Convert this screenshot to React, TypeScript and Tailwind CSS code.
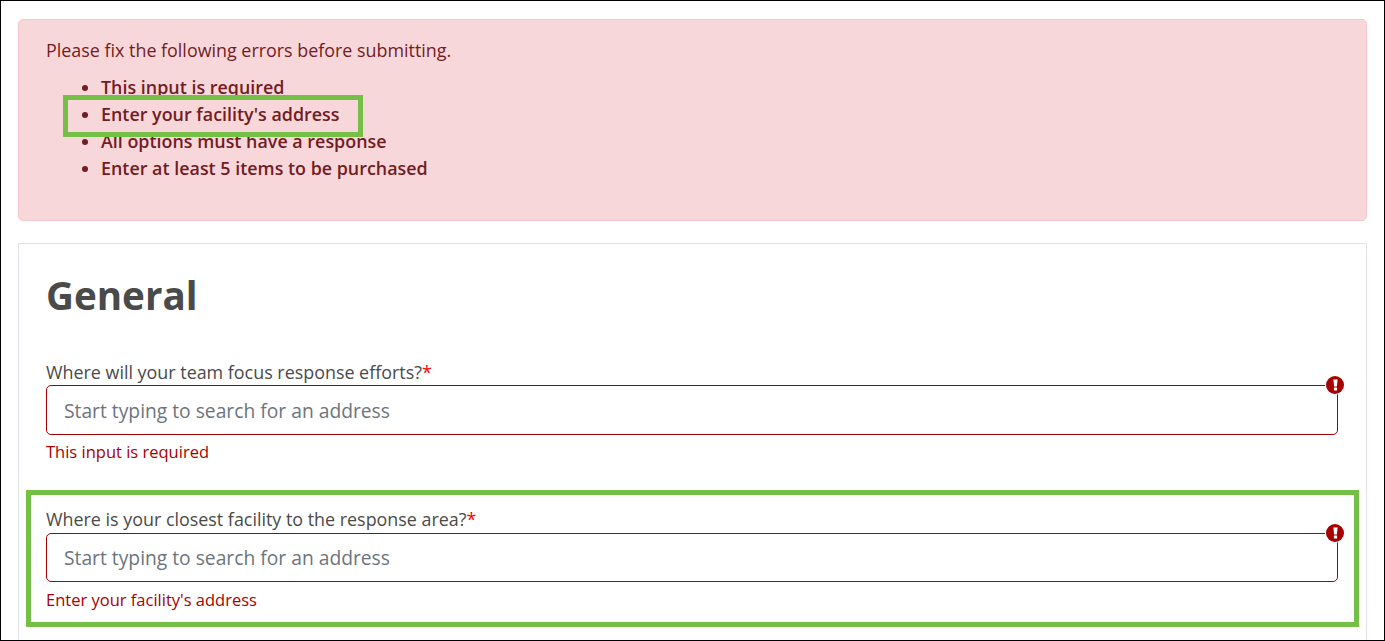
import React from 'react';

const errors = [
  'This input is required',
  "Enter your facility's address",
  'All options must have a response',
  'Enter at least 5 items to be purchased',
];

const AddressField: React.FC<{ label: string; error: string; labelClass: string; inputClass: string; errorClass: string; className: string }> = ({ label, error, labelClass, inputClass, errorClass, className }) => (
  <div className={className}>
    <label className={`block text-[17.9px] text-[#4a4a4a] ${labelClass}`}>
      {label}
      <span className="text-[#ff0000]">*</span>
    </label>
    <div className="relative">
      <input
        readOnly
        placeholder="Start typing to search for an address"
        className={`block w-full rounded-[5px] border border-[#a80000] bg-white px-[17px] text-[19.25px] text-[#495057] placeholder:text-[#6c757d] outline-none ${inputClass}`}
      />
      <span className="absolute right-[-6px] top-[-9px] flex h-[18px] w-[18px] items-center justify-center rounded-full bg-[#a80000] ring-1 ring-white">
        <svg width="5" height="12" viewBox="0 0 5 12" fill="white">
          <path d="M0.4 0.6h4.2l-0.7 6.8h-2.8z" />
          <rect x="0.9" y="8.6" width="3.2" height="2.8" rx="0.5" />
        </svg>
      </span>
    </div>
    <p className={`text-[16.5px] leading-[24px] text-[#a80000] ${errorClass}`}>{error}</p>
  </div>
);

export default function App() {
  return (
    <div className="relative h-[641px] w-[1385px] overflow-hidden border border-black bg-white font-['Open_Sans',sans-serif]">
      <div className="flex flex-col gap-[22px] pl-[17px] pr-[17px] pt-[18px]">
        <div className="h-[202px] rounded-[5px] border border-[#f5c6cb] bg-[#f8d7da] pl-[27px] pt-[17px] text-[#721c24]">
          <p className="text-[17.9px] leading-[26px]">Please fix the following errors before submitting.</p>
          <ul className="mt-[11px] list-disc pl-[55px] text-[17.9px] font-semibold leading-[27px]">
            {errors.map(item => (
              <li key={item}>{item}</li>
            ))}
          </ul>
        </div>

        <div className="h-[420px] border border-[#dee2e6] pl-[27px] pr-[28px] pt-[23px]">
          <h2 className="text-[38.6px] font-bold leading-[56px] text-[#4a4a4a]">General</h2>
          <AddressField
            className="mt-[37px]"
            label="Where will your team focus response efforts?"
            labelClass="leading-[25px]"
            inputClass="h-[50px]"
            error="This input is required"
            errorClass="mt-[5px]"
          />
          <AddressField
            className="mt-[43px]"
            label="Where is your closest facility to the response area?"
            labelClass="leading-[24px] pb-[2px]"
            inputClass="h-[49px]"
            error="Enter your facility's address"
            errorClass="mt-[6px]"
          />
        </div>
      </div>

      {/* green annotation boxes drawn over the form */}
      <div className="absolute left-[62px] top-[94px] h-[42px] w-[300px] border-[5px] border-[#74bf45]" />
      <div className="absolute left-[25px] top-[489px] h-[137px] w-[1333px] border-[5px] border-[#74bf45]" />
    </div>
  );
}
